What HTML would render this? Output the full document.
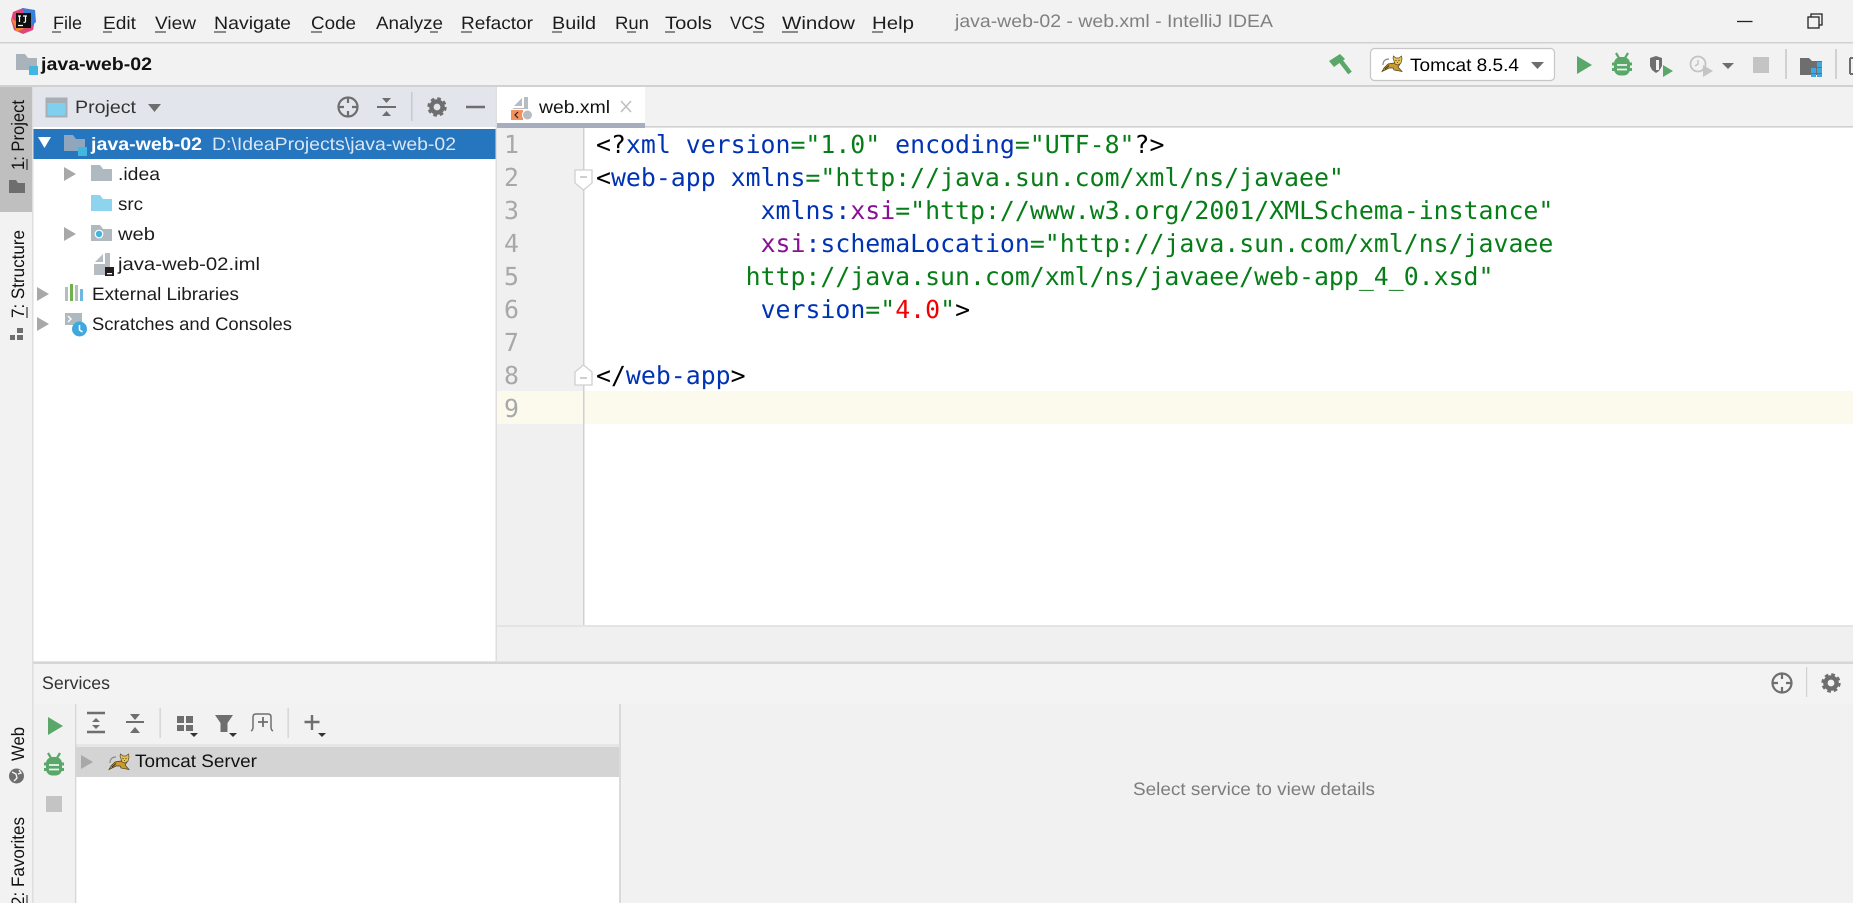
<!DOCTYPE html>
<html><head><meta charset="utf-8"><title>java-web-02 - web.xml - IntelliJ IDEA</title>
<style>
html,body{margin:0;padding:0;width:1853px;height:903px;overflow:hidden;background:#f2f2f2}
svg{display:block}
text{font-family:"Liberation Sans","Noto Sans CJK SC",sans-serif;font-size:18px;fill:#1c1c1c;text-rendering:geometricPrecision}
.m text,text.m{font-family:"DejaVu Sans Mono","Liberation Mono",monospace;font-size:24.85px}
.k{fill:#000}.b{fill:#0033b3}.g{fill:#067d17}.p{fill:#871094}.r{fill:#f00000}
.n text{fill:#a8a8a8}
</style></head><body>
<svg width="1853" height="903" viewBox="0 0 1853 903" xmlns="http://www.w3.org/2000/svg">
<defs>
<g id="loc" fill="none" stroke="#6e6e6e" stroke-width="2.2"><circle r="9.5"/><path d="M0-10V-4M0 10V4M-10 0H-4M10 0H4"/></g>
<g id="gear"><circle r="5.6" fill="none" stroke="#6e6e6e" stroke-width="4.4"/><circle r="8.3" fill="none" stroke="#6e6e6e" stroke-width="2.8" stroke-dasharray="3.6 2.92"/></g>
<g id="bug"><path d="M-6-12l3 5M6-12l-3 5" stroke="#59a869" stroke-width="2.2" fill="none"/><rect x="-8" y="-8" width="16" height="18.500" rx="6.500" fill="#59a869"/><rect x="-10" y="-2.500" width="20" height="3" fill="#59a869"/><rect x="-10" y="3" width="20" height="3" fill="#59a869"/><path d="M-5 0H5M-5 4.500H5" stroke="#f2f2f2" stroke-width="1.800"/></g>
<g id="cat"><path d="M1 9Q1 3 7 3" stroke="#8a8a8a" fill="none" stroke-width="1.200"/><path d="M12 7L6 8L2 12L0 15.500L4 13.500L7 12L11 12L12 14L20 15.500L16 11L18 8Z" fill="#c99a2e" stroke="#4a3a18" stroke-width=".7"/><path d="M11 2L11.500 0L14 2H17L19.500 0L20 3L19 7L16 9L13 8Z" fill="#e8c558" stroke="#5a4a20" stroke-width=".7"/><path d="M13.500 4l1 1M17.500 4l-1 1M15.500 6v1" stroke="#5a4510" stroke-width=".9"/><path d="M3 13L7 9.500" stroke="#3c3010" stroke-width="1"/></g>
<g id="fld"><path d="M0 0H9L12 4H21V16H0Z"/></g>
<path id="ar" d="M0 0L12 7L0 14Z" fill="#a8a8a8"/>
</defs>

<rect width="1853" height="903" fill="#f2f2f2"/>
<!-- menu -->
<g transform="translate(-23,0)">
<path d="M36 12L46 8L56 10L58 20L56 30L46 34L37 30L34 20Z" fill="#e0457a"/>
<path d="M45 8L58 10L59 22L52 28Z" fill="#3b7ddb"/>
<path d="M34 18L40 32L48 28Z" fill="#f08c2c"/>
<rect x="39" y="13" width="15" height="15" fill="#0e0e0e"/>
<path d="M41 16h3M42.500 16v6M46 16h4M48.500 16v5.500q0 1-2 .8M41 25.500h5" stroke="#fff" stroke-width="1.200" fill="none"/>
</g>
<text x="53" y="29" textLength="29" lengthAdjust="spacingAndGlyphs">File</text>
<text x="103" y="29" textLength="33" lengthAdjust="spacingAndGlyphs">Edit</text>
<text x="155" y="29" textLength="41" lengthAdjust="spacingAndGlyphs">View</text>
<text x="214" y="29" textLength="77" lengthAdjust="spacingAndGlyphs">Navigate</text>
<text x="311" y="29" textLength="45" lengthAdjust="spacingAndGlyphs">Code</text>
<text x="376" y="29" textLength="67" lengthAdjust="spacingAndGlyphs">Analyze</text>
<text x="461" y="29" textLength="72" lengthAdjust="spacingAndGlyphs">Refactor</text>
<text x="552" y="29" textLength="44" lengthAdjust="spacingAndGlyphs">Build</text>
<text x="615" y="29" textLength="34" lengthAdjust="spacingAndGlyphs">Run</text>
<text x="665" y="29" textLength="47" lengthAdjust="spacingAndGlyphs">Tools</text>
<text x="730" y="29" textLength="35" lengthAdjust="spacingAndGlyphs">VCS</text>
<text x="782" y="29" textLength="73" lengthAdjust="spacingAndGlyphs">Window</text>
<text x="872" y="29" textLength="42" lengthAdjust="spacingAndGlyphs">Help</text>
<path d="M52 32h9M103 32h9M155 32h11M214 32h12M311 32h11M430 32h8M461 32h11M552 32h10M627 32h9M665 32h10M753 32h10M782 32h16M872 32h11" stroke="#222" stroke-width="1"/>
<text x="955" y="27" textLength="318" lengthAdjust="spacingAndGlyphs" style="fill:#808080">java-web-02 - web.xml - IntelliJ IDEA</text>
<path d="M1737 21.500h15.500" stroke="#222" stroke-width="1.300"/>
<path d="M1811 17v-3h11v11h-3" fill="none" stroke="#222" stroke-width="1.300"/><rect x="1808" y="17" width="11" height="11" fill="none" stroke="#222" stroke-width="1.300"/>
<rect x="0" y="42" width="1853" height="1.500" fill="#d1d1d1"/>

<!-- nav -->
<use href="#fld" x="16" y="54" fill="#aab3ba"/>
<rect x="29" y="66" width="9" height="9" fill="#40b6e0"/>
<text x="41" y="70" textLength="111" lengthAdjust="spacingAndGlyphs" font-weight="bold" style="fill:#111">java-web-02</text>
<path d="M1329 61L1340 54L1345 59L1334 67Z" fill="#59a869"/><path d="M1340 60L1350 73" stroke="#59a869" stroke-width="4.500"/>
<rect x="1370.500" y="48.500" width="184" height="32" rx="4" fill="#fff" stroke="#c6c6c6" stroke-width="1.200"/>
<use href="#cat" x="1382" y="56"/>
<text x="1410" y="71" textLength="109" lengthAdjust="spacingAndGlyphs" style="fill:#000">Tomcat 8.5.4</text>
<path d="M1531 62h13l-6.500 7Z" fill="#6e6e6e"/>
<path d="M1577 56L1592 65L1577 74Z" fill="#59a869"/>
<use href="#bug" x="1622" y="65"/>
<path d="M1650 58L1656 56L1662 58V66L1659 71L1656 73L1652 70L1650 66Z" fill="#6e6e6e"/><path d="M1656 60h3v10h-3z" fill="#f2f2f2"/><path d="M1663 65l10 6-10 6Z" fill="#59a869"/>
<circle cx="1698" cy="64" r="7.500" fill="none" stroke="#c4c4c4" stroke-width="1.800"/><path d="M1698 60v4l-3 2" stroke="#c4c4c4" fill="none" stroke-width="1.500"/><path d="M1703 65l10 6-10 6Z" fill="#c4c4c4"/>
<path d="M1722 63h12l-6 6Z" fill="#6e6e6e"/>
<rect x="1753" y="57" width="16" height="16" fill="#c4c4c4"/>
<rect x="1785" y="49" width="2" height="30" fill="#d1d1d1"/>
<path d="M1800 58h9l3 3h10v14h-22Z" fill="#6e6e6e"/><rect x="1811" y="68" width="5" height="5" fill="#40a8e0"/><rect x="1817" y="68" width="5" height="5" fill="#40a8e0"/><rect x="1817" y="62" width="5" height="5" fill="#40a8e0"/><rect x="1811" y="74" width="5" height="3" fill="#40a8e0"/><rect x="1817" y="74" width="5" height="3" fill="#40a8e0"/>
<rect x="1835" y="49" width="2" height="30" fill="#d1d1d1"/>
<path d="M1850 58v16" stroke="#6e6e6e" stroke-width="2"/><path d="M1850 58h3M1850 74h3" stroke="#6e6e6e" stroke-width="2"/>
<rect x="0" y="85" width="1853" height="2" fill="#d1d1d1"/>

<!-- left strip -->
<rect x="0" y="87" width="32" height="125" fill="#bfbfbf"/>
<rect x="32" y="87" width="1.500" height="816" fill="#dedede"/>
<text transform="translate(24,170) rotate(-90)" textLength="70" lengthAdjust="spacingAndGlyphs" style="fill:#111">1: Project</text>
<path d="M27 170v-11" stroke="#111" stroke-width="1"/>
<path d="M9 180h7l2 3h7v10H9Z" fill="#6e6e6e"/>
<text transform="translate(24,318) rotate(-90)" textLength="88" lengthAdjust="spacingAndGlyphs" style="fill:#111">7: Structure</text>
<path d="M27 318v-11" stroke="#111" stroke-width="1"/>
<path d="M10 335h5v5h-5zM17 335h6v5h-6zM17 328h6v5h-6z" fill="#6e6e6e"/>
<text transform="translate(24,761) rotate(-90)" textLength="34" lengthAdjust="spacingAndGlyphs" style="fill:#111">Web</text>
<circle cx="16.500" cy="776" r="7.500" fill="#6e6e6e"/><path d="M12 772l4 2 1 4-3 3M19 770l2 3-3 1" stroke="#f2f2f2" stroke-width="1.400" fill="none"/>
<text transform="translate(24,906) rotate(-90)" textLength="89" lengthAdjust="spacingAndGlyphs" style="fill:#111">2: Favorites</text>
<path d="M27 903v-8" stroke="#111" stroke-width="1"/>

<!-- project panel -->
<rect x="33.500" y="87" width="462" height="40" fill="#e2e5ec"/>
<rect x="33.500" y="127" width="462" height="534" fill="#fff"/>
<rect x="46.500" y="98.500" width="20" height="18" fill="#7fcfee" stroke="#a9aeb5" stroke-width="2"/><rect x="47" y="99" width="19" height="4" fill="#a9aeb5"/>
<text x="75" y="113" textLength="61" lengthAdjust="spacingAndGlyphs" style="fill:#333">Project</text>
<path d="M148 104h13l-6.500 8Z" fill="#6e6e6e"/>
<use href="#loc" x="348" y="107"/>
<path d="M377 107h19" stroke="#6e6e6e" stroke-width="2"/><path d="M382 98h9l-4.500 5ZM382 116h9l-4.500-5Z" fill="#6e6e6e"/>
<rect x="411" y="92" width="1.500" height="29" fill="#c6c9d0"/>
<use href="#gear" x="437" y="107"/>
<path d="M466 107h19" stroke="#6e6e6e" stroke-width="2.400"/>

<rect x="33.500" y="129" width="462" height="30" fill="#2675bf"/>
<path d="M38 137h13l-6.500 11Z" fill="#fff"/>
<use href="#fld" x="64" y="135" fill="#8fa6bc"/>
<rect x="78" y="147" width="9" height="9" fill="#40b6e0"/>
<text x="91" y="150" textLength="111" lengthAdjust="spacingAndGlyphs" font-weight="bold" style="fill:#fff">java-web-02</text>
<text x="212" y="150" textLength="244" lengthAdjust="spacingAndGlyphs" style="fill:#dbe6f3">D:\IdeaProjects\java-web-02</text>

<use href="#ar" x="64" y="167"/>
<use href="#fld" x="91" y="165" fill="#aeb9c0"/>
<text x="118" y="180" textLength="42" lengthAdjust="spacingAndGlyphs">.idea</text>
<use href="#fld" x="91" y="195" fill="#8fd4ef"/>
<text x="118" y="210" textLength="25" lengthAdjust="spacingAndGlyphs">src</text>
<use href="#ar" x="64" y="227"/>
<use href="#fld" x="91" y="225" fill="#aeb9c0"/>
<circle cx="99" cy="234" r="3.800" fill="#40b6e0" stroke="#fff" stroke-width="1.200"/>
<text x="118" y="240" textLength="37" lengthAdjust="spacingAndGlyphs">web</text>
<path d="M95 262L103 254V262Z" fill="#b5bcc2"/><path d="M105 253H110V275H94V264H105Z" fill="#b5bcc2"/>
<rect x="105" y="267" width="9" height="9" fill="#231f20"/><rect x="107" y="273" width="5" height="1.300" fill="#fff"/>
<text x="118" y="270" textLength="142" lengthAdjust="spacingAndGlyphs">java-web-02.iml</text>
<use href="#ar" x="37" y="287"/>
<rect x="65" y="287" width="3" height="14" fill="#b5bcc2"/><rect x="70" y="284" width="3" height="17" fill="#6cb34c"/><rect x="75" y="285" width="3" height="16" fill="#b5bcc2"/><rect x="80" y="289" width="3" height="12" fill="#6fb6e0"/>
<text x="92" y="300" textLength="147" lengthAdjust="spacingAndGlyphs">External Libraries</text>
<use href="#ar" x="37" y="317"/>
<path d="M65 313h17v12H65Z" fill="#aeb9c0"/><path d="M68 316l3 3-3 3" stroke="#fff" fill="none" stroke-width="1.400"/>
<circle cx="79.500" cy="329" r="7.500" fill="#40a8dd"/><path d="M79.500 325v5l3 2" stroke="#fff" fill="none" stroke-width="1.500"/>
<text x="92" y="330" textLength="200" lengthAdjust="spacingAndGlyphs">Scratches and Consoles</text>

<!-- editor tabs -->
<rect x="495.500" y="87" width="1.500" height="574" fill="#dedede"/>
<rect x="497" y="87" width="148" height="36" fill="#fff"/>
<rect x="497" y="126" width="1356" height="1.500" fill="#d1d1d1"/>
<rect x="497" y="123" width="148" height="5" fill="#a6adbf"/>
<path d="M514 106L522 98V106Z" fill="#b5bcc2"/><path d="M524 97H528V109H513V108H524Z" fill="#b5bcc2"/>
<rect x="511" y="110" width="12" height="10" fill="#f4905c"/><path d="M518 112l-3 3 3 3" stroke="#222" fill="none" stroke-width="1.200"/>
<circle cx="527.500" cy="115" r="5" fill="#b5bcc2" stroke="#fff"/>
<text x="539" y="113" textLength="71" lengthAdjust="spacingAndGlyphs" style="fill:#111">web.xml</text>
<path d="M621 101l10 11M631 101l-10 11" stroke="#bdbdbd" stroke-width="1.500"/>

<!-- editor -->
<rect x="497" y="128" width="1356" height="497" fill="#fff"/>
<rect x="497" y="128" width="86" height="497" fill="#f0f0f0"/>
<rect x="497" y="391" width="1356" height="33" fill="#fcfaed"/>
<rect x="583" y="128" width="1.500" height="497" fill="#d0d0d0"/>
<g class="m n">
<text x="504" y="153">1</text><text x="504" y="186">2</text><text x="504" y="219">3</text><text x="504" y="252">4</text><text x="504" y="285">5</text><text x="504" y="318">6</text><text x="504" y="351">7</text><text x="504" y="384">8</text><text x="504" y="417">9</text>
</g>
<path d="M575 170h17v13l-8.500 7-8.500-7Z" fill="#fff" stroke="#d0d0d0" stroke-width="1.300"/><path d="M580 177h7" stroke="#b5b5b5" stroke-width="1.300"/>
<path d="M575 385h17v-13l-8.500-7-8.500 7Z" fill="#fff" stroke="#d0d0d0" stroke-width="1.300"/><path d="M580 378h7" stroke="#b5b5b5" stroke-width="1.300"/>
<g class="m">
<text x="596" y="153"><tspan class="k">&lt;?</tspan><tspan class="b">xml version</tspan><tspan class="g">="1.0"</tspan><tspan class="b"> encoding</tspan><tspan class="g">="UTF-8"</tspan><tspan class="k">?&gt;</tspan></text>
<text x="596" y="186"><tspan class="k">&lt;</tspan><tspan class="b">web-app xmlns</tspan><tspan class="g">="http://java.sun.com/xml/ns/javaee"</tspan></text>
<text x="760.600" y="219"><tspan class="b">xmlns:</tspan><tspan class="p">xsi</tspan><tspan class="g">="http://www.w3.org/2001/XMLSchema-instance"</tspan></text>
<text x="760.600" y="252"><tspan class="p">xsi</tspan><tspan class="b">:schemaLocation</tspan><tspan class="g">="http://java.sun.com/xml/ns/javaee</tspan></text>
<text x="745.600" y="285"><tspan class="g">http://java.sun.com/xml/ns/javaee/web-app_4_0.xsd"</tspan></text>
<text x="760.600" y="318"><tspan class="b">version</tspan><tspan class="g">="</tspan><tspan class="r">4.0</tspan><tspan class="g">"</tspan><tspan class="k">&gt;</tspan></text>
<text x="596" y="384"><tspan class="k">&lt;/</tspan><tspan class="b">web-app</tspan><tspan class="k">&gt;</tspan></text>
</g>
<rect x="497" y="625" width="1356" height="2" fill="#e4e4e4"/>
<rect x="497" y="627" width="1356" height="35" fill="#f0f0f0"/>

<!-- services -->
<rect x="33.500" y="661.500" width="1820" height="2.500" fill="#d6d6d6"/>
<rect x="33.500" y="664" width="1820" height="40" fill="#f3f3f3"/>
<rect x="33.500" y="704" width="1820" height="199" fill="#f1f1f1"/>
<text x="42" y="689" textLength="68" lengthAdjust="spacingAndGlyphs" style="fill:#333">Services</text>
<use href="#loc" x="1782" y="683"/>
<rect x="1806" y="667" width="1.200" height="30" fill="#d0d0d0"/>
<use href="#gear" x="1831" y="683"/>

<rect x="76" y="704" width="543" height="199" fill="#fff"/>
<rect x="76" y="704" width="543" height="40" fill="#f2f2f2"/>
<rect x="76" y="744" width="543" height="3" fill="#e6e6e6"/>
<rect x="75" y="704" width="1.300" height="199" fill="#d6d6d6"/>
<rect x="619" y="704" width="2" height="199" fill="#dadada"/>
<path d="M48 717L63 726L48 735Z" fill="#59a869"/>
<use href="#bug" x="54" y="765"/>
<rect x="46" y="796" width="16" height="16" fill="#c4c4c4"/>
<!-- toolbar icons -->
<path d="M87 713h18M87 732h18" stroke="#6e6e6e" stroke-width="2.400"/><path d="M92 722h8l-4-4ZM92 725h8l-4 4Z" fill="#6e6e6e"/>
<path d="M126 722h18" stroke="#6e6e6e" stroke-width="2"/><path d="M130 714h10l-5 6ZM130 733h10l-5-6Z" fill="#6e6e6e"/>
<rect x="159.500" y="708" width="1.300" height="30" fill="#d1d1d1"/>
<path d="M177 716h7v7h-7zM186 716h7v7h-7zM177 725h7v6h-7zM186 725h7v6h-7z" fill="#6e6e6e"/><path d="M190 733h8l-4 4Z" fill="#333"/>
<path d="M215 715h18l-5.500 8v9h-7v-9Z" fill="#6e6e6e"/><path d="M229 733h8l-4 4Z" fill="#333"/>
<path d="M251 731q2-1 2-4v-10q0-3 3-3h12q3 0 3 3v10q0 3 2 4" fill="none" stroke="#6e6e6e" stroke-width="1.500"/><path d="M263 717v10M258 722h10" stroke="#6e6e6e" stroke-width="1.800"/>
<rect x="287.500" y="708" width="1.300" height="30" fill="#d1d1d1"/>
<path d="M312 715v15M304.500 722h15" stroke="#6e6e6e" stroke-width="2.400"/><path d="M318 733h8l-4 4Z" fill="#333"/>

<rect x="76" y="747" width="543" height="30" fill="#d4d4d4"/>
<path d="M81 755L93 762L81 769Z" fill="#a8a8a8"/>
<use href="#cat" x="109" y="754"/>
<text x="135" y="767" textLength="122" lengthAdjust="spacingAndGlyphs" style="fill:#111">Tomcat Server</text>

<text x="1133" y="795" textLength="242" lengthAdjust="spacingAndGlyphs" style="fill:#7d7d7d">Select service to view details</text>
</svg>
</body></html>
